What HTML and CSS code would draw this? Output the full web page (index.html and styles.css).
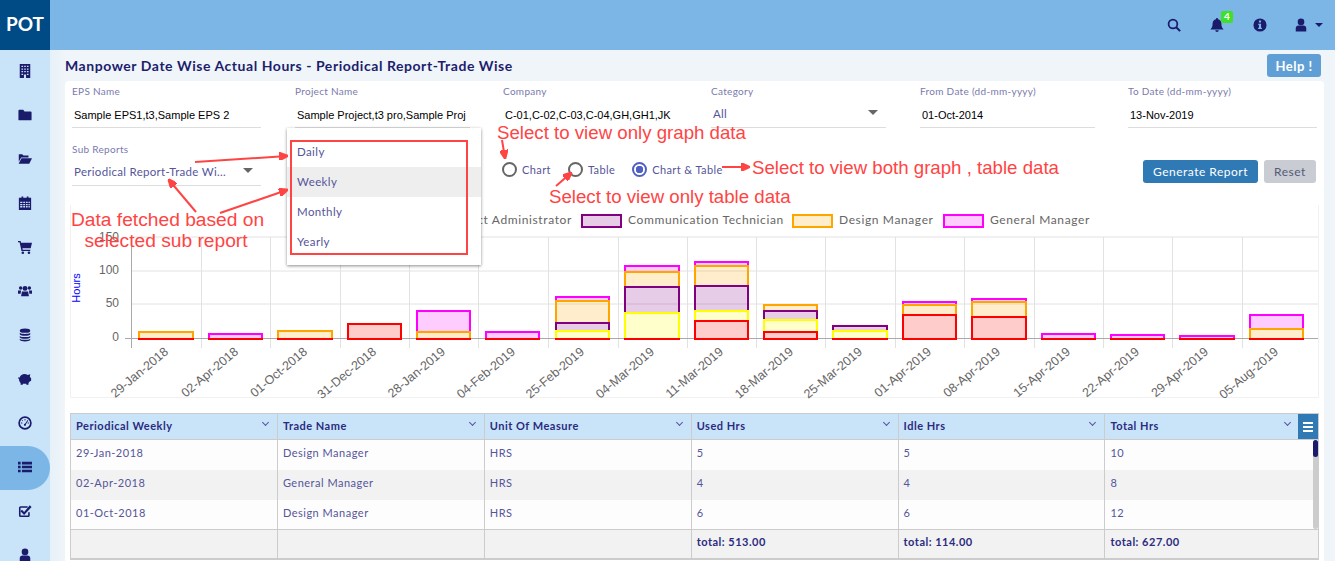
FILE: index.html

```html
<!DOCTYPE html>
<html>
<head>
<meta charset="utf-8">
<title>Manpower Date Wise Actual Hours</title>
<link rel="stylesheet" href="styles.css">
</head>
<body>

<svg class="defs" width="0" height="0">
	<symbol id="i-building" viewBox="0 0 16 16"><path fill-rule="evenodd" d="M2 0h12v16H2zM4 2v1.500h1.800V2zM7.100 2v1.500h1.800V2zM10.200 2v1.500H12V2zM4 5v1.500h1.800V5zM7.100 5v1.500h1.800V5zM10.200 5v1.500H12V5zM4 8v1.500h1.800V8zM7.100 8v1.500h1.800V8zM10.200 8v1.500H12V8zM4 11v1.500h1.800V11zM10.200 11v1.500H12V11zM6.800 12v4h2.400v-4z"/></symbol>
	<symbol id="i-folder" viewBox="0 0 16 16"><path d="M1.500 2h4.500l1.500 2h7a1 1 0 0 1 1 1v8a1 1 0 0 1-1 1h-13a1 1 0 0 1-1-1V3a1 1 0 0 1 1-1z"/></symbol>
	<symbol id="i-open" viewBox="0 0 18 16"><path d="M1 2h4.500l1.500 1.500h6.500V6H4L1 11.500V3z"/><path d="M4.500 7H18l-3.500 7H.8z"/></symbol>
	<symbol id="i-calendar" viewBox="0 0 16 16"><path fill-rule="evenodd" d="M1 2h3V.5h2V2h4V.5h2V2h3v14H1zM2.500 6.500V8H5V6.500zM6 6.500V8h2V6.500zM9 6.500V8h2V6.500zM12 6.500V8h1.500V6.500zM2.500 9V10.500H5V9zM6 9V10.500h2V9zM9 9V10.500h2V9zM12 9V10.500h1.500V9zM2.500 11.500V13H5V11.500zM6 11.500V13h2V11.500zM9 11.500V13h2V11.500zM12 11.500V13h1.500V11.500z"/></symbol>
	<symbol id="i-cart" viewBox="0 0 16 16"><path d="M0 1h3l.5 2H16l-1.500 6.500H5l.4 1.500H14v1.500H4L1.800 2.500H0z"/><circle cx="5.500" cy="14.500" r="1.500"/><circle cx="12.500" cy="14.500" r="1.500"/></symbol>
	<symbol id="i-users" viewBox="0 0 16 16"><circle cx="3" cy="4.500" r="2"/><circle cx="13" cy="4.500" r="2"/><circle cx="8" cy="5" r="2.800"/><path d="M0 7.500h3.500L3 11H0zM16 7.500h-3.500l.5 3.500h3zM4.500 8.500h7L12.500 14h-9z"/></symbol>
	<symbol id="i-database" viewBox="0 0 16 16"><ellipse cx="8" cy="3" rx="6" ry="2.500"/><path d="M2 5.500c1 1.800 11 1.800 12 0V7c-1 2.500-11 2.500-12 0zM2 9c1 1.800 11 1.800 12 0v1.500c-1 2.500-11 2.500-12 0zM2 12.200c1 1.800 11 1.800 12 0V13.500c-1 2.500-11 2.500-12 0z"/></symbol>
	<symbol id="i-piggy" viewBox="0 0 16 16"><path d="M4 3.500c2-1.500 5-1.500 7 0l3-1-.5 3 1.500 1.500v3l-2 1-1 1.500V14.500H9.500V13.500h-4v1H3V12.500C1.500 11 1 9 1.200 8L0 7l.5-1 1.200.5C2 5.500 3 4.200 4 3.500z"/></symbol>
	<symbol id="i-gauge" viewBox="0 0 16 16"><circle cx="8" cy="8" r="6.700" fill="none" stroke="currentColor" stroke-width="2"/><path d="M8 8.800l3-4.300.8.5-2.800 4.400a1.200 1.200 0 1 1-1-.6z"/><path d="M7.500 3.500h1V5h-1zM3.500 7.500H5v1H3.500zM11 7.500h1.500v1H11zM4.800 4.500l1 1-.6.600-1-1z"/></symbol>
	<symbol id="i-list" viewBox="0 0 16 16"><path d="M0 2h3v3H0zM4.500 2H16v3H4.500zM0 6.500h3v3H0zM4.500 6.500H16v3H4.500zM0 11h3v3H0zM4.500 11H16v3H4.500z"/></symbol>
	<symbol id="i-check" viewBox="0 0 16 16"><path d="M12.500 9.500V13a1 1 0 0 1-1 1H3a1 1 0 0 1-1-1V4.500a1 1 0 0 1 1-1h8" fill="none" stroke="currentColor" stroke-width="1.800"/><path d="M4.500 6.500L7 9l6.500-7.500L15.500 3.500 7 12.500 2.800 8.300z"/></symbol>
	<symbol id="i-user" viewBox="0 0 16 16"><circle cx="8" cy="4.500" r="3.800"/><path d="M2 15.500V11.500c0-2 1.500-3 3-3h6c1.500 0 3 1 3 3v4z"/></symbol>
	<symbol id="i-search" viewBox="0 0 16 16"><circle cx="6.800" cy="6.800" r="5" fill="none" stroke="currentColor" stroke-width="2"/><path d="M10.500 10.500L15 15" stroke="currentColor" stroke-width="2.400"/></symbol>
	<symbol id="i-bell" viewBox="0 0 16 16"><path d="M8 0a1.200 1.200 0 0 1 1.200 1.300C11.500 1.800 13 3.700 13 6c0 4 1 5.500 2.500 7h-15C2 11.500 3 10 3 6c0-2.300 1.500-4.200 3.800-4.700A1.200 1.200 0 0 1 8 0zM6 14h4a2 2 0 0 1-4 0z"/></symbol>
	<symbol id="i-info" viewBox="0 0 16 16"><path fill-rule="evenodd" d="M8 .5a7.500 7.500 0 1 1 0 15 7.500 7.500 0 0 1 0-15zM6.800 2.800v2.400h2.400V2.800zM5.800 6.500v1.300h1v3.400h-1v1.300h4.400v-1.300h-1V6.500z"/></symbol>
</svg>

<div class="topbar">
	<div class="logo">POT</div>
	<div class="topnav">
		<svg class="top-icon"><use href="#i-search"/></svg>
		<div class="bell">
			<svg class="top-icon"><use href="#i-bell"/></svg>
			<span class="badge">4</span>
		</div>
		<svg class="top-icon"><use href="#i-info"/></svg>
		<div class="usermenu">
			<svg class="top-icon"><use href="#i-user"/></svg>
			<span class="caret"></span>
		</div>
	</div>
</div>

<div class="layout">
	<div class="sidebar">
		<a class="side-item"><svg class="side-icon"><use href="#i-building"/></svg></a>
		<a class="side-item"><svg class="side-icon"><use href="#i-folder"/></svg></a>
		<a class="side-item"><svg class="side-icon"><use href="#i-open"/></svg></a>
		<a class="side-item"><svg class="side-icon"><use href="#i-calendar"/></svg></a>
		<a class="side-item"><svg class="side-icon"><use href="#i-cart"/></svg></a>
		<a class="side-item"><svg class="side-icon"><use href="#i-users"/></svg></a>
		<a class="side-item"><svg class="side-icon"><use href="#i-database"/></svg></a>
		<a class="side-item"><svg class="side-icon"><use href="#i-piggy"/></svg></a>
		<a class="side-item"><svg class="side-icon"><use href="#i-gauge"/></svg></a>
		<a class="side-item side-active"><svg class="side-icon"><use href="#i-list"/></svg></a>
		<a class="side-item"><svg class="side-icon"><use href="#i-check"/></svg></a>
		<a class="side-item"><svg class="side-icon"><use href="#i-user"/></svg></a>
	</div>

	<div class="content">
		<div class="title-row">
			<h1 class="page-title">Manpower Date Wise Actual Hours - Periodical Report-Trade Wise</h1>
			<button class="btn btn-help">Help !</button>
		</div>

		<div class="card">
			<div class="filters">
				<div class="field">
					<label class="field-label">EPS Name</label>
					<div class="field-value line">Sample EPS1,t3,Sample EPS 2</div>
				</div>
				<div class="field narrow">
					<label class="field-label">Project Name</label>
					<div class="field-value line">Sample Project,t3 pro,Sample Proj</div>
				</div>
				<div class="field narrow">
					<label class="field-label">Company</label>
					<div class="field-value">C-01,C-02,C-03,C-04,GH,GH1,JK</div>
				</div>
				<div class="field narrow">
					<label class="field-label">Category</label>
					<div class="select-value line">All<span class="arrow"></span></div>
				</div>
				<div class="field narrow">
					<label class="field-label">From Date (dd-mm-yyyy)</label>
					<div class="field-value line">01-Oct-2014</div>
				</div>
				<div class="field">
					<label class="field-label">To Date (dd-mm-yyyy)</label>
					<div class="field-value line">13-Nov-2019</div>
				</div>

				<div class="field">
					<label class="field-label">Sub Reports</label>
					<div class="select-value line">Periodical Report-Trade Wi...<span class="arrow"></span></div>
				</div>
				<div class="radios">
					<label class="radio"><span class="dot"></span>Chart</label>
					<label class="radio"><span class="dot"></span>Table</label>
					<label class="radio"><span class="dot dot-on"></span>Chart &amp; Table</label>
				</div>
				<div class="actions">
					<button class="btn btn-primary">Generate Report</button>
					<button class="btn btn-reset">Reset</button>
				</div>
			</div>

			<div class="chart-box">
				<svg class="chart" viewBox="70 205 1249 193">
					<path class="frame" d="M70.500 205V397.500H1318.500V205"/>
					<g class="grid">
						<path d="M131 237H1318M131 271H1318M131 304H1318"/>
						<path d="M131.500 237V348M201.500 237V348M270.500 237V348M340.500 237V348M409.500 237V348M478.500 237V348M548.500 237V348M618.500 237V348M687.500 237V348M756.500 237V348M825.500 237V348M895.500 237V348M964.500 237V348M1034.500 237V348M1103.500 237V348M1172.500 237V348M1242.500 237V348"/>
					</g>
					<path class="axis" d="M125 338.500H1318M131.500 237V348"/>

					<g class="legend-text">
						<text x="572" y="224" text-anchor="end">Contract Administrator</text>
						<text x="628" y="224">Communication Technician</text>
						<text x="839" y="224">Design Manager</text>
						<text x="990" y="224">General Manager</text>
					</g>
					<rect class="s-purple" x="582" y="215" width="39" height="12"/>
					<rect class="s-orange" x="793" y="215" width="39" height="12"/>
					<rect class="s-magenta" x="944" y="215" width="39" height="12"/>

					<g class="ticks">
						<text x="119" y="241">150</text>
						<text x="119" y="274">100</text>
						<text x="119" y="307">50</text>
						<text x="119" y="341">0</text>
					</g>
					<text class="y-title" transform="translate(80,288) rotate(-90)">Hours</text>

					<!-- 29-Jan-2018 -->
					<rect class="s-orange" x="139" y="332" width="54" height="7"/>
					<!-- 02-Apr-2018 -->
					<rect class="s-magenta" x="209" y="334" width="53" height="5"/>
					<!-- 01-Oct-2018 -->
					<rect class="s-orange" x="278" y="331" width="54" height="8"/>
					<!-- 31-Dec-2018 -->
					<rect class="s-red" x="348" y="324" width="53" height="15"/>
					<!-- 28-Jan-2019 -->
					<rect class="s-magenta" x="417" y="311" width="53" height="21"/>
					<rect class="s-orange" x="417" y="332" width="53" height="7"/>
					<!-- 04-Feb-2019 -->
					<rect class="s-magenta" x="486" y="332" width="53" height="7"/>
					<!-- 25-Feb-2019 -->
					<rect class="s-magenta" x="556" y="297" width="53" height="4"/>
					<rect class="s-orange" x="556" y="301" width="53" height="22"/>
					<rect class="s-purple" x="556" y="323" width="53" height="8"/>
					<rect class="s-yellow" x="556" y="331" width="53" height="8"/>
					<!-- 04-Mar-2019 -->
					<rect class="s-magenta" x="625" y="266" width="54" height="6"/>
					<rect class="s-orange" x="625" y="272" width="54" height="15"/>
					<rect class="s-purple" x="625" y="287" width="54" height="26"/>
					<rect class="s-yellow" x="625" y="313" width="54" height="26"/>
					<!-- 11-Mar-2019 -->
					<rect class="s-magenta" x="695" y="262" width="53" height="4"/>
					<rect class="s-orange" x="695" y="266" width="53" height="20"/>
					<rect class="s-purple" x="695" y="286" width="53" height="25"/>
					<rect class="s-yellow" x="695" y="311" width="53" height="10"/>
					<rect class="s-red" x="695" y="321" width="53" height="18"/>
					<!-- 18-Mar-2019 -->
					<rect class="s-orange" x="764" y="305" width="53" height="6"/>
					<rect class="s-purple" x="764" y="311" width="53" height="9"/>
					<rect class="s-yellow" x="764" y="320" width="53" height="12"/>
					<rect class="s-red" x="764" y="332" width="53" height="7"/>
					<!-- 25-Mar-2019 -->
					<rect class="s-purple" x="833" y="326" width="54" height="5"/>
					<rect class="s-yellow" x="833" y="331" width="54" height="8"/>
					<!-- 01-Apr-2019 -->
					<rect class="s-magenta" x="903" y="302" width="53" height="3"/>
					<rect class="s-orange" x="903" y="305" width="53" height="10"/>
					<rect class="s-red" x="903" y="315" width="53" height="24"/>
					<!-- 08-Apr-2019 -->
					<rect class="s-magenta" x="972" y="299" width="54" height="3"/>
					<rect class="s-orange" x="972" y="302" width="54" height="15"/>
					<rect class="s-red" x="972" y="317" width="54" height="22"/>
					<!-- 15-Apr-2019 -->
					<rect class="s-magenta" x="1042" y="334" width="53" height="5"/>
					<!-- 22-Apr-2019 -->
					<rect class="s-magenta" x="1111" y="335" width="53" height="4"/>
					<!-- 29-Apr-2019 -->
					<rect class="s-magenta" x="1180" y="336" width="54" height="3"/>
					<!-- 05-Aug-2019 -->
					<rect class="s-magenta" x="1250" y="315" width="53" height="14"/>
					<rect class="s-orange" x="1250" y="329" width="53" height="10"/>

					<path class="zero" d="M138 339H194M208 339H263M277 339H333M347 339H402M416 339H471M485 339H540M555 339H610M624 339H680M694 339H749M763 339H818M832 339H888M902 339H957M971 339H1027M1041 339H1096M1110 339H1165M1179 339H1235M1249 339H1304"/>

					<g class="dates">
						<text transform="translate(169,353) rotate(-40)">29-Jan-2018</text>
						<text transform="translate(239,353) rotate(-40)">02-Apr-2018</text>
						<text transform="translate(308,353) rotate(-40)">01-Oct-2018</text>
						<text transform="translate(377,353) rotate(-40)">31-Dec-2018</text>
						<text transform="translate(446,353) rotate(-40)">28-Jan-2019</text>
						<text transform="translate(516,353) rotate(-40)">04-Feb-2019</text>
						<text transform="translate(585,353) rotate(-40)">25-Feb-2019</text>
						<text transform="translate(655,353) rotate(-40)">04-Mar-2019</text>
						<text transform="translate(724,353) rotate(-40)">11-Mar-2019</text>
						<text transform="translate(794,353) rotate(-40)">18-Mar-2019</text>
						<text transform="translate(863,353) rotate(-40)">25-Mar-2019</text>
						<text transform="translate(932,353) rotate(-40)">01-Apr-2019</text>
						<text transform="translate(1001,353) rotate(-40)">08-Apr-2019</text>
						<text transform="translate(1071,353) rotate(-40)">15-Apr-2019</text>
						<text transform="translate(1140,353) rotate(-40)">22-Apr-2019</text>
						<text transform="translate(1209,353) rotate(-40)">29-Apr-2019</text>
						<text transform="translate(1279,353) rotate(-40)">05-Aug-2019</text>
					</g>
				</svg>
			</div>

			<div class="table-box">
				<table class="grid-table">
					<thead>
						<tr>
							<th>Periodical Weekly<span class="chev"></span></th>
							<th>Trade Name<span class="chev"></span></th>
							<th>Unit Of Measure<span class="chev"></span></th>
							<th>Used Hrs<span class="chev"></span></th>
							<th>Idle Hrs<span class="chev"></span></th>
							<th class="col-last">Total Hrs<span class="chev chev-last"></span></th>
						</tr>
					</thead>
					<tbody>
						<tr><td>29-Jan-2018</td><td>Design Manager</td><td>HRS</td><td>5</td><td>5</td><td>10</td></tr>
						<tr class="alt"><td>02-Apr-2018</td><td>General Manager</td><td>HRS</td><td>4</td><td>4</td><td>8</td></tr>
						<tr><td>01-Oct-2018</td><td>Design Manager</td><td>HRS</td><td>6</td><td>6</td><td>12</td></tr>
					</tbody>
					<tfoot>
						<tr><td></td><td></td><td></td><td>total: 513.00</td><td>total: 114.00</td><td>total: 627.00</td></tr>
					</tfoot>
				</table>
				<button class="col-menu"><span></span><span></span><span></span></button>
				<div class="scrollbar"><div class="thumb"></div></div>
			</div>
		</div>
	</div>
</div>

<!-- dropdown opened from Sub Reports -->
<div class="menu">
	<div class="menu-item">Daily</div>
	<div class="menu-item menu-hover">Weekly</div>
	<div class="menu-item">Monthly</div>
	<div class="menu-item">Yearly</div>
</div>

<!-- red notes drawn on top of the screen -->
<div class="note-box"></div>
<div class="note note-graph">Select to view only graph data</div>
<div class="note note-both">Select to view both graph , table data</div>
<div class="note note-table">Select to view only table data</div>
<div class="note note-sub">Data fetched based on<br>selected sub report</div>
<svg class="note-arrows" viewBox="0 0 1335 561">
	<defs>
		<marker id="head" markerWidth="9" markerHeight="8" refX="8" refY="4" orient="auto" markerUnits="userSpaceOnUse"><path d="M0 0L9 4L0 8z" fill="#ff4444"/></marker>
	</defs>
	<path d="M195 162L287 156" marker-end="url(#head)"/>
	<path d="M220 213L287 190" marker-end="url(#head)"/>
	<path d="M196 212L169 180" marker-end="url(#head)"/>
	<path d="M502 140L505 158" marker-end="url(#head)"/>
	<path d="M556 186L571 173" marker-end="url(#head)"/>
	<path d="M722 167L749 167" marker-end="url(#head)"/>
</svg>

</body>
</html>
```

FILE: styles.css

```css
html, body {
	margin: 0;
	padding: 0;
	height: 100%;
	overflow: hidden;
}

body {
	background: #eff5f9;
	font-family: "Lato", "Liberation Sans", sans-serif;
	color: #55559a;
	position: relative;
}

.defs {
	position: absolute;
}

/* top bar */
.topbar {
	display: flex;
	height: 50px;
	background: #7cb6e6;
}

.logo {
	width: 50px;
	background: #004a85;
	color: #fff;
	font-size: 19px;
	font-weight: 700;
	line-height: 48px;
	text-align: center;
}

.topnav {
	flex: 1;
	display: flex;
	justify-content: flex-end;
	align-items: center;
	gap: 29px;
	padding-right: 12px;
}

.top-icon {
	display: block;
	width: 14px;
	height: 14px;
	color: #1b1b6b;
	fill: #1b1b6b;
}

.bell {
	position: relative;
}

.badge {
	position: absolute;
	left: 11px;
	top: -7px;
	width: 12px;
	height: 12px;
	border-radius: 2px;
	background: #3fe02a;
	color: #fff;
	font-size: 10px;
	font-weight: 700;
	line-height: 11px;
	text-align: center;
}

.usermenu {
	display: flex;
	align-items: center;
	gap: 7px;
	margin-left: -2px;
}

.caret {
	border-left: 4px solid transparent;
	border-right: 4px solid transparent;
	border-top: 4px solid #1b1b6b;
}

/* left nav */
.layout {
	display: flex;
	height: 511px;
}

.sidebar {
	width: 50px;
	flex: none;
	background: #c9e4f9;
}

.side-item {
	display: flex;
	box-sizing: border-box;
	height: 44px;
	padding-bottom: 2px;
	align-items: center;
	justify-content: center;
}

.side-active {
	background: #7cb6e6;
	border-radius: 0 22px 22px 0;
}

.side-icon {
	display: block;
	width: 14px;
	height: 14px;
	color: #1b1b6b;
	fill: #1b1b6b;
}

/* content */
.content {
	flex: 1;
	min-width: 0;
	padding: 0 11px 0 15px;
	background: linear-gradient(90deg, #e6f1f8, #f0f5f9 15px);
}

.title-row {
	display: flex;
	height: 31px;
	align-items: center;
	justify-content: space-between;
	padding-right: 3px;
}

.page-title {
	margin: 0;
	color: #1d1d6e;
	font-size: 14px;
	font-weight: 700;
	letter-spacing: 0.55px;
}

.btn {
	height: 23px;
	padding: 0;
	border: 0;
	border-radius: 3px;
	font-family: "Lato", "Liberation Sans", sans-serif;
	font-size: 12px;
	letter-spacing: 0.5px;
}

.btn-help {
	width: 54px;
	background: #609fd6;
	color: #fff;
	font-size: 13px;
	font-weight: 700;
}

.btn-primary {
	width: 115px;
	background: #2f79b4;
	color: #fff;
}

.btn-reset {
	width: 52px;
	background: #c9ccd2;
	color: #555a78;
}

.card {
	background: #fff;
	border-radius: 4px 4px 0 0;
	height: 480px;
	padding: 0 5px;
}

.filters {
	display: grid;
	grid-template-columns: 223px 208px 208px 209px 208px 188px;
	padding: 4px 0 0 2px;
	row-gap: 15px;
	height: 120px;
	box-sizing: border-box;
	align-content: start;
}

.field {
	width: 189px;
}

.narrow {
	width: 175px;
}

.field-label {
	display: block;
	height: 13px;
	color: #7a7aad;
	font-size: 10px;
	line-height: 13px;
	letter-spacing: 0.3px;
}

.field-value {
	height: 24px;
	margin-top: 5px;
	padding-left: 2px;
	color: #000;
	font-family: "Liberation Sans", sans-serif;
	font-size: 11px;
	line-height: 24px;
	white-space: nowrap;
	overflow: hidden;
}

.select-value {
	position: relative;
	height: 24px;
	margin-top: 5px;
	padding-left: 2px;
	font-size: 11.500px;
	line-height: 22px;
	letter-spacing: 0.3px;
	white-space: nowrap;
}

.line {
	border-bottom: 1px solid #ddd;
}

.arrow {
	position: absolute;
	right: 8px;
	top: 7px;
	border-left: 5px solid transparent;
	border-right: 5px solid transparent;
	border-top: 5px solid #666;
}

.radios {
	grid-column: 3 / 6;
	display: flex;
	align-items: center;
	gap: 17px;
	height: 52px;
	margin-left: -1px;
}

.radio {
	display: flex;
	align-items: center;
	gap: 5px;
	font-size: 11px;
	letter-spacing: 0.4px;
}

.dot {
	box-sizing: border-box;
	width: 15px;
	height: 15px;
	border: 2px solid #666;
	border-radius: 50%;
}

.dot-on {
	border-color: #4f5fc4;
	background: radial-gradient(circle, #4f5fc4 0 3.500px, #fff 4px);
}

.actions {
	display: flex;
	justify-content: flex-end;
	align-items: flex-start;
	gap: 6px;
	padding-top: 17px;
	box-sizing: border-box;
	height: 40px;
}

/* chart */
.chart-box {
	height: 193px;
	margin-top: 4px;
}

.chart {
	display: block;
	width: 1249px;
	height: 193px;
	overflow: visible;
}

.frame {
	fill: none;
	stroke: #f1f1f1;
}

.grid path {
	fill: none;
	stroke: #e2e2e2;
	stroke-width: 1;
}

.axis {
	fill: none;
	stroke: #aaa;
	stroke-width: 1;
}

.legend-text text {
	fill: #666;
	font-size: 12px;
	letter-spacing: 0.62px;
}

.ticks text {
	fill: #666;
	font-family: "Liberation Sans", sans-serif;
	font-size: 12px;
	text-anchor: end;
}

.y-title {
	fill: #0000ff;
	font-family: "Liberation Sans", sans-serif;
	font-size: 11px;
	text-anchor: middle;
}

.dates text {
	fill: #666;
	font-family: "Liberation Sans", sans-serif;
	font-size: 12.500px;
	text-anchor: end;
}

.s-red, .s-yellow, .s-purple, .s-orange, .s-magenta {
	stroke-width: 2;
}

.s-red {
	fill: rgba(255, 0, 0, 0.2);
	stroke: #f00;
}

.s-yellow {
	fill: rgba(255, 255, 0, 0.2);
	stroke: #ff0;
}

.s-purple {
	fill: rgba(128, 0, 128, 0.2);
	stroke: #800080;
}

.s-orange {
	fill: rgba(255, 165, 0, 0.2);
	stroke: #ffa500;
}

.s-magenta {
	fill: rgba(255, 0, 255, 0.2);
	stroke: #f0f;
}

.zero {
	fill: none;
	stroke: #f00;
	stroke-width: 2;
}

/* table */
.table-box {
	position: relative;
	margin-top: 15px;
}

.grid-table {
	width: 1249px;
	table-layout: fixed;
	border-collapse: collapse;
	border: 1px solid #ccc;
	border-bottom-width: 2px;
	font-size: 11px;
	letter-spacing: 0.5px;
}

.grid-table th {
	position: relative;
	width: 200.900px;
	height: 23px;
	padding: 0 0 2px 5px;
	box-sizing: content-box;
	background: #c9e4f9;
	border: 1px solid #ccc;
	color: #2b2b80;
	font-weight: 700;
	text-align: left;
}

.grid-table th.col-last {
	width: auto;
}

.grid-table td {
	height: 30px;
	padding: 0 5px 4px;
	box-sizing: border-box;
	background: #fdfdfd;
	border-left: 1px solid #ccc;
}

.grid-table .alt td {
	background: #f2f2f2;
}

.grid-table tfoot td {
	height: 29px;
	background: #f2f2f2;
	border-top: 1px solid #ccc;
	color: #2b2b80;
	font-weight: 700;
	padding-bottom: 5px;
}

.chev {
	position: absolute;
	right: 9px;
	top: 6px;
	width: 4px;
	height: 4px;
	border-right: 1px solid #55559a;
	border-bottom: 1px solid #55559a;
	transform: rotate(45deg);
}

.chev-last {
	right: 28px;
}

.col-menu {
	position: absolute;
	right: 1px;
	top: 1px;
	display: flex;
	flex-direction: column;
	align-items: center;
	justify-content: center;
	gap: 2px;
	width: 20px;
	height: 25px;
	padding: 0;
	border: 0;
	background: #2f79b4;
}

.col-menu span {
	width: 10px;
	height: 2px;
	background: #fff;
}

.scrollbar {
	position: absolute;
	right: 1px;
	top: 27px;
	width: 5px;
	height: 89px;
	border-radius: 3px;
	background: #ccc;
}

.thumb {
	height: 17px;
	border-radius: 3px;
	background: #1b1b6b;
}

/* dropdown */
.menu {
	position: absolute;
	left: 287px;
	top: 128px;
	box-sizing: border-box;
	width: 194px;
	height: 137px;
	padding-top: 9px;
	background: #fff;
	box-shadow: 0 1px 3px rgba(0, 0, 0, 0.45);
	font-size: 11.500px;
	letter-spacing: 0.4px;
}

.menu-item {
	height: 30px;
	padding-left: 10px;
	line-height: 30px;
}

.menu-hover {
	background: #eee;
}

/* annotations */
.note {
	position: absolute;
	color: #ff4444;
	font-family: "Liberation Sans", sans-serif;
	font-size: 18.670px;
	line-height: 21px;
	white-space: nowrap;
}

.note-graph {
	left: 497px;
	top: 122px;
}

.note-both {
	left: 752px;
	top: 157px;
}

.note-table {
	left: 549px;
	top: 186px;
}

.note-sub {
	left: 71px;
	top: 209px;
	width: 190px;
	font-size: 19.200px;
	text-align: center;
}

.note-box {
	position: absolute;
	left: 290px;
	top: 140px;
	box-sizing: border-box;
	width: 178px;
	height: 115px;
	border: 2px solid #ff4444;
}

.note-arrows {
	position: absolute;
	left: 0;
	top: 0;
	width: 1335px;
	height: 561px;
	fill: none;
	stroke: #ff4444;
	stroke-width: 2;
	pointer-events: none;
}
```
